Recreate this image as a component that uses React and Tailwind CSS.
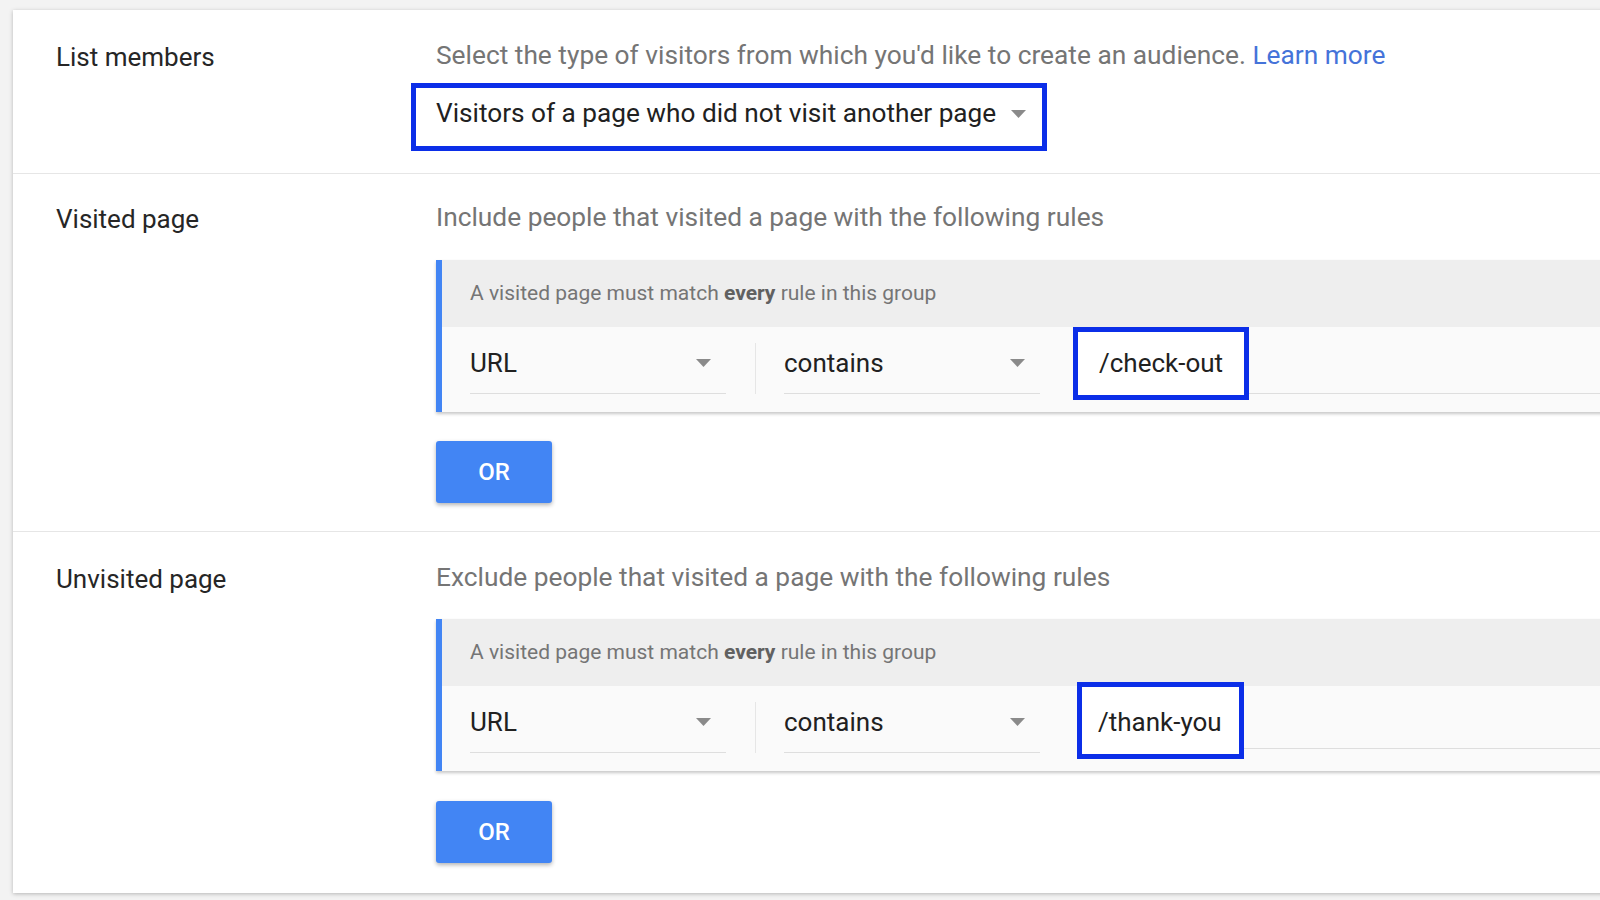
import React from "react";

const Caret = ({ className = "" }) => (
  <svg width="15" height="8" viewBox="0 0 15 8" className={className}>
    <path d="M0 0 L15 0 L7.5 8 Z" fill="#8a8a8a" />
  </svg>
);

const SelectField = ({ label }) => (
  <div className="w-[256px] h-[67px] flex items-center justify-between border-b border-[#dedede] pt-[6px] pr-[15px]">
    <span className="text-[26px] leading-[32px] text-[#212121]">{label}</span>
    <Caret />
  </div>
);

const RuleGroup = ({ value, boxClass, padClass }) => (
  <div className="border-l-[6px] border-[#4285f4] shadow-[0_2px_3px_rgba(0,0,0,0.22)]">
    <div className="h-[67px] bg-[#eeeeee] pl-[28px] flex items-center text-[21px] text-[#757575]">
      <span>
        A visited page must match <b className="font-bold text-[#616161]">every</b> rule in this group
      </span>
    </div>
    <div className="h-[85px] bg-[#fafafa] pl-[28px] flex items-start">
      <SelectField label="URL" />
      <div className="w-[58px] flex justify-center pt-[16px]">
        <div className="w-px h-[51px] bg-[#e6e6e6]" />
      </div>
      <SelectField label="contains" />
      <div className={"flex items-start flex-1 " + boxClass}>
        <div
          className={
            "h-full border-[5px] border-[#0b2ee8] bg-white flex items-center text-[26px] text-[#212121] " + padClass
          }
        >
          {value}
        </div>
        <div className="flex-1 h-[67px] border-b border-[#dedede]" />
      </div>
    </div>
  </div>
);

const OrButton = ({ className = "" }) => (
  <button
    className={
      "w-[116px] h-[62px] rounded-[3px] bg-[#4285f4] text-white text-[24px] font-medium shadow-[0_2px_4px_rgba(0,0,0,0.3)] " +
      className
    }
  >
    OR
  </button>
);

const Label = ({ children }) => (
  <div className="w-[423px] shrink-0 pl-[43px] pt-[2px] text-[26px] leading-[32px] text-[#262626]">{children}</div>
);

export default function App() {
  return (
    <div className="w-[1600px] h-[900px] overflow-hidden bg-[#f3f3f3] pt-[10px] pl-[13px] font-['Roboto',sans-serif]">
      <div className="w-[1640px] bg-white shadow-[0_1px_4px_rgba(0,0,0,0.25)]">
        {/* List members */}
        <section className="flex pt-[29px] pb-[22px]">
          <Label>List members</Label>
          <div className="flex-1">
            <p className="text-[26.3px] leading-[32px] text-[#757575]">
              Select the type of visitors from which you'd like to create an audience.{" "}
              <span className="text-[#4573d9]">Learn more</span>
            </p>
            <div className="mt-[12px] -ml-[25px] w-[636px] h-[68px] border-[5px] border-[#0b2ee8] flex items-center justify-between pl-[20px] pr-[16px] pb-[6px]">
              <span className="text-[26.2px] text-[#212121]">Visitors of a page who did not visit another page</span>
              <Caret />
            </div>
          </div>
        </section>

        {/* Visited page */}
        <section className="flex pt-[27px] pb-[28px] border-t border-[#e6e6e6]">
          <Label>Visited page</Label>
          <div className="flex-1">
            <p className="text-[26.3px] leading-[32px] text-[#757575]">
              Include people that visited a page with the following rules
            </p>
            <div className="mt-[27px]">
              <RuleGroup value="/check-out" boxClass="ml-[33px] h-[73px]" padClass="pl-[21px] pr-[21px]" />
            </div>
            <OrButton className="mt-[29px]" />
          </div>
        </section>

        {/* Unvisited page */}
        <section className="flex pt-[29px] pb-[30px] border-t border-[#e6e6e6]">
          <Label>Unvisited page</Label>
          <div className="flex-1">
            <p className="text-[26.3px] leading-[32px] text-[#757575]">
              Exclude people that visited a page with the following rules
            </p>
            <div className="mt-[26px]">
              <RuleGroup value="/thank-you" boxClass="ml-[37px] -mt-[4px] h-[77px]" padClass="pl-[16px] pr-[17px] pt-[3px]" />
            </div>
            <OrButton className="mt-[30px]" />
          </div>
        </section>
      </div>
    </div>
  );
}
